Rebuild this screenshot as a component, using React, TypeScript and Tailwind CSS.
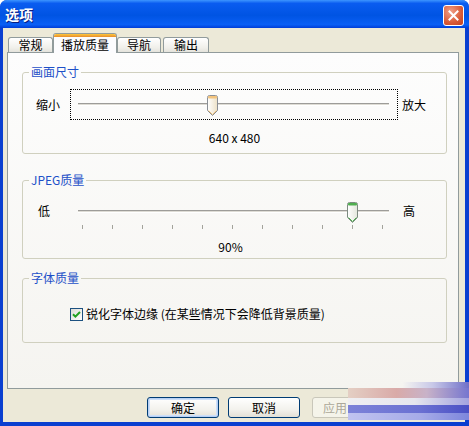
import { useId } from "react";

const FONT = "font-['Noto_Sans_CJK_SC','Liberation_Sans',sans-serif]";

function Thumb({ value, accent, stroke, fill }: { value: number; accent: string; stroke: string; fill: string }) {
  const id = useId().replace(/:/g, "");
  return (
    <svg
      width="11"
      height="21"
      viewBox="0 0 11 21"
      className="absolute top-[5px]"
      style={{ left: 6 + value * 300 }}
    >
      <defs>
        <linearGradient id={id} x1="0" y1="0" x2="1" y2="0">
          <stop offset="0" stopColor="#ffffff" />
          <stop offset="1" stopColor={fill} />
        </linearGradient>
      </defs>
      <path
        d="M0.5 2.5 Q0.5 0.5 2.5 0.5 H8.5 Q10.5 0.5 10.5 2.5 V15.5 L5.5 20.5 L0.5 15.5 Z"
        fill={`url(#${id})`}
        stroke={stroke}
      />
      <rect x="1" y="1" width="9" height="2.5" rx="1" fill={accent} />
      <path d="M1.5 15.5 L5.5 19.5 L9.5 15.5" fill="none" stroke={accent} strokeWidth="1" />
    </svg>
  );
}

function Slider({
  value,
  focus,
  ticks,
  accent,
  stroke,
  fill,
}: {
  value: number;
  focus?: boolean;
  ticks?: boolean;
  accent: string;
  stroke: string;
  fill: string;
}) {
  return (
    <div className={`relative h-[31px] border ${focus ? "border-dotted border-black" : "border-transparent"}`}>
      <div className="mt-[13px] ml-[7px] mr-[8px] h-[3px] border-t border-t-[#9d9c99] border-b border-b-white bg-[#dedcd5]" />
      {ticks && (
        <div className="mt-[12px] flex justify-between pl-[11px] pr-[14px]">
          {Array.from({ length: 11 }).map((_, i) => (
            <span key={i} className="h-[4px] w-px bg-[#a3a39b]" />
          ))}
        </div>
      )}
      <Thumb value={value} accent={accent} stroke={stroke} fill={fill} />
    </div>
  );
}

function Group({ label, h, className, children }: { label: string; h: string; className?: string; children: React.ReactNode }) {
  return (
    <fieldset className={`${h} ${className ?? ""} rounded-[3px] border border-[#d0d0bf]`}>
      <legend className="ml-[6px] px-[2px] text-[12px] leading-[14px] text-[#1d50c8]">{label}</legend>
      {children}
    </fieldset>
  );
}

function Tab({ label, active, w }: { label: string; active?: boolean; w: string }) {
  if (active) {
    return (
      <div
        className={`${w} relative z-10 -mb-px flex h-[20px] flex-col overflow-hidden rounded-t-[3px] border border-b-0 border-[#919b9c] bg-[#fcfcfe]`}
      >
        <div className="h-[3px] bg-[linear-gradient(to_bottom,#ffc83c,#e68b2c)]" />
        <div className="flex flex-1 items-center justify-center text-[12px] leading-[14px] text-black">{label}</div>
      </div>
    );
  }
  return (
    <div
      className={`${w} flex h-[15px] items-center justify-center rounded-t-[3px] border border-b-0 border-[#919b9c] bg-[linear-gradient(to_bottom,#ffffff,#f0efea_70%,#e4e3dc)] text-[12px] leading-[14px] text-black`}
    >
      {label}
    </div>
  );
}

function Button({ label, primary, disabled }: { label: string; primary?: boolean; disabled?: boolean }) {
  const base = "flex h-[21px] w-[72px] items-center rounded-[3px] border text-[12px] leading-[14px]";
  if (disabled)
    return (
      <div className={`${base} ml-[3px] justify-start border-[#c9c7ba] bg-[#f5f4ea] pl-[10px] text-[#aca899]`}>
        {label}
      </div>
    );
  return (
    <div
      className={`${base} justify-center border-[#003c74] bg-[linear-gradient(to_bottom,#ffffff,#f3f2ed_60%,#e3e0d6)] text-black ${
        primary ? "shadow-[inset_0_0_0_1px_#b7d0f4,inset_0_0_0_2px_#cddff8]" : ""
      }`}
    >
      {label}
    </div>
  );
}

export default function App() {
  return (
    <div className={`${FONT} relative flex h-[426px] w-[469px] flex-col overflow-hidden rounded-t-[7px] bg-[#0a3fd0]`}>
      {/* title bar */}
      <div className="flex h-[28px] shrink-0 items-start justify-between bg-[linear-gradient(to_bottom,#3d95ff_0%,#0a5cf0_12%,#0054e3_55%,#0a5ff5_88%,#003dd7_100%)] pl-[5px] pr-[5px]">
        <span className="mt-[6px] text-[14px] font-bold leading-[16px] text-white [text-shadow:1px_1px_0_#0a1e80]">选项</span>
        <div className="mt-[5px] flex h-[21px] w-[21px] items-center justify-center rounded-[3px] border border-white bg-[radial-gradient(circle_at_35%_30%,#f0a088,#d95b37_60%,#c2401f)]">
          <svg width="11" height="11" viewBox="0 0 11 11">
            <path d="M1.5 1.5 L9.5 9.5 M9.5 1.5 L1.5 9.5" stroke="white" strokeWidth="2" strokeLinecap="square" />
          </svg>
        </div>
      </div>

      {/* body */}
      <div className="mb-[4px] ml-[3px] mr-[4px] flex flex-1 flex-col bg-[#ece9d8] pl-[4px] pr-[6px] text-[12px] text-black">
        <div className="mt-[5px] flex h-[19px] items-end pl-[1px]">
          <Tab label="常规" w="w-[45px]" />
          <Tab label="播放质量" active w="w-[64px]" />
          <Tab label="导航" w="w-[44px]" />
          <div className="w-[2px]" />
          <Tab label="输出" w="w-[46px]" />
        </div>

        <div className="flex h-[337px] flex-col border border-[#919b9c] bg-[linear-gradient(to_bottom,#fdfdfd,#f5f4f0)] pl-[14px] pr-[11px] pt-[12px]">
          <Group label="画面尺寸" h="h-[89px]">
            <div className="mt-[10px] grid grid-cols-[47px_328px_1fr] items-center">
              <span className="pl-[13px] leading-[14px]">缩小</span>
              <Slider value={0.433} focus accent="#f3c47e" stroke="#8a8f96" fill="#ece0c6" />
              <span className="pl-[4px] leading-[14px]">放大</span>
            </div>
            <div className="mt-[12px] text-center leading-[12px]">640 x 480</div>
          </Group>

          <Group label="JPEG质量" h="h-[86px]" className="mt-[19px]">
            <div className="mt-[9px] grid grid-cols-[47px_328px_1fr] items-start">
              <span className="pl-[15px] pt-[8px] leading-[14px]">低</span>
              <Slider value={0.9} ticks accent="#4fae4f" stroke="#7c8a80" fill="#e3e6dc" />
              <span className="pl-[5px] pt-[8px] leading-[14px]">高</span>
            </div>
            <div className="mt-[14px] pr-[8px] text-center leading-[12px]">90%</div>
          </Group>

          <Group label="字体质量" h="h-[72px]" className="mt-[12px]">
            <div className="ml-[47px] mt-[22px] flex items-center">
              <div className="flex h-[13px] w-[13px] items-center justify-center border border-[#1c5180] bg-[linear-gradient(135deg,#dcdcd7,#ffffff)]">
                <svg width="9" height="9" viewBox="0 0 9 9">
                  <path d="M1 4.2 L3.4 6.6 L8 2" fill="none" stroke="#21a121" strokeWidth="2" />
                </svg>
              </div>
              <span className="ml-[3px] leading-[14px]">锐化字体边缘 (在某些情况下会降低背景质量)</span>
            </div>
          </Group>
        </div>

        <div className="ml-[140px] mt-[8px] flex gap-[9px]">
          <Button label="确定" primary />
          <Button label="取消" />
          <Button label="应用" disabled />
        </div>
      </div>

      {/* blurred watermark over the lower right corner */}
      <div className="absolute left-[348px] top-[382px] flex h-[38px] w-[121px] flex-col">
        <div className="h-[6px] bg-[linear-gradient(to_right,transparent_0%,transparent_45%,#c8c8e8_70%,#7070c8_100%)]" />
        <div className="h-[10px] bg-[linear-gradient(to_right,#e4cfc4_0%,#d9aaa8_40%,#c8b2c8_65%,#7676cf_100%)]" />
        <div className="h-[7px] bg-[linear-gradient(to_right,#efeff2_0%,#e6e6ee_55%,#a3a3df_100%)]" />
        <div className="h-[8px] bg-[linear-gradient(to_right,#7c82d8_0%,#6a70d2_60%,#4a50c4_100%)]" />
        <div className="h-[7px] bg-[linear-gradient(to_right,#c0c3f0_0%,#a6abe8_60%,#7d86dc_100%)]" />
      </div>
    </div>
  );
}
